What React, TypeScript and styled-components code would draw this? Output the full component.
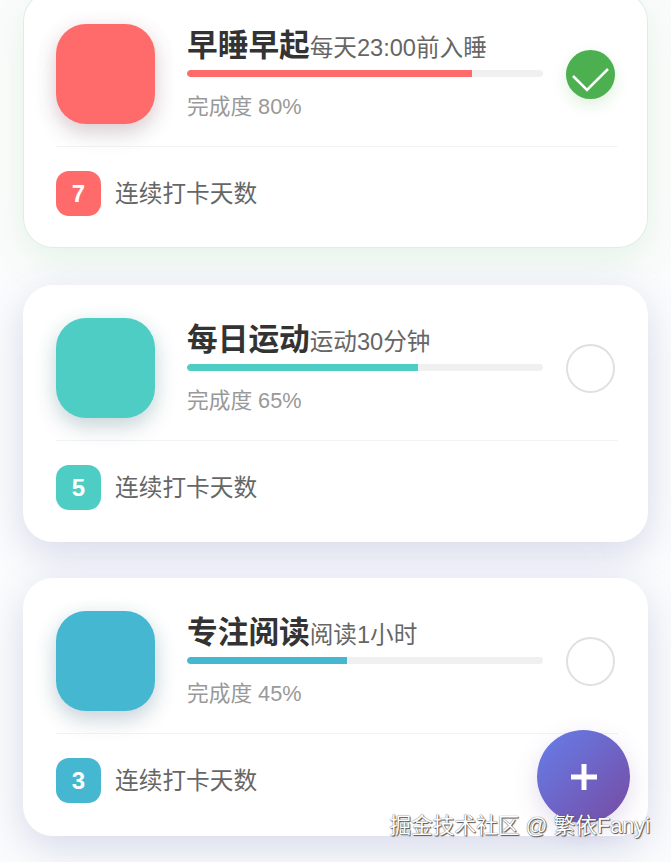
import React from 'react';
import styled, { createGlobalStyle } from 'styled-components';

const GlobalStyle = createGlobalStyle`
  html, body {
    margin: 0;
    height: 100%;
    overflow: hidden;
    background: #fbfcfd;
    font-family: "Liberation Sans", "Noto Sans CJK SC", sans-serif;
  }
`;

const Page = styled.div`
  position: relative;
  width: 671px;
  height: 862px;
  overflow: hidden;
`;

const List = styled.div`
  display: flex;
  flex-direction: column;
  gap: 36px;
  margin-top: -9px;
  padding: 0 23px;
`;

const Card = styled.div<{ $done?: boolean }>`
  height: 257px;
  box-sizing: border-box;
  padding: 33px 30px 0 33px;
  background: #fff;
  border-radius: 30px;
  margin-bottom: ${(p) => (p.$done ? '1px' : '0')};
  box-shadow: ${(p) =>
    p.$done
      ? 'inset 0 0 0 1px #dcefe1, 0 12px 40px rgba(76, 175, 80, 0.13)'
      : '0 12px 40px rgba(70, 80, 160, 0.2)'};

  &:last-child {
    height: 258px;
  }
`;

const Main = styled.div`
  display: flex;
  align-items: flex-start;
  height: 123px;
  box-sizing: border-box;
  border-bottom: 1px solid #f2f3f4;
`;

const Icon = styled.div<{ $color: string }>`
  flex: none;
  width: 99px;
  height: 100px;
  border-radius: 30px;
  background: ${(p) => p.$color};
  box-shadow: 0 9px 22px rgba(60, 70, 90, 0.2), 0 4px 20px ${(p) => p.$color}22;
`;

const Body = styled.div`
  flex: none;
  width: 356px;
  margin-left: 32px;
`;

const TitleRow = styled.div`
  display: flex;
  align-items: baseline;
  height: 46px;
  white-space: nowrap;
`;

const Title = styled.span`
  font-size: 30.7px;
  line-height: 44px;
  font-weight: 700;
  color: #333;
`;

const Desc = styled.span`
  font-size: 23.6px;
  color: #666;
`;

const Track = styled.div`
  height: 7px;
  border-radius: 4px;
  background: #f0f0f0;
  overflow: hidden;
`;

const Fill = styled.div<{ $color: string }>`
  height: 100%;
  border-radius: 4px 0 0 4px;
  background: ${(p) => p.$color};
`;

const Percent = styled.div`
  margin-top: 14px;
  font-size: 21.7px;
  line-height: 32px;
  color: #999;
`;

const Check = styled.div<{ $done?: boolean }>`
  flex: none;
  box-sizing: border-box;
  width: 49px;
  height: 49px;
  margin: 26px 0 0 23px;
  border-radius: 50%;
  background: ${(p) => (p.$done ? '#4caf50' : '#fff')};
  border: ${(p) => (p.$done ? 'none' : '2px solid #e0e0e0')};
  box-shadow: ${(p) => (p.$done ? '0 6px 16px rgba(76, 175, 80, 0.18)' : 'none')};
`;

const Footer = styled.div`
  display: flex;
  align-items: center;
  gap: 14px;
  padding-top: 24px;
`;

const Streak = styled.div<{ $color: string }>`
  width: 45px;
  height: 45px;
  display: flex;
  align-items: center;
  justify-content: center;
  border-radius: 13px;
  background: ${(p) => p.$color};
  color: #fff;
  font-size: 24px;
  font-weight: 700;
`;

const StreakLabel = styled.span`
  font-size: 23.7px;
  padding-bottom: 4px;
  color: #666;
`;

const Fab = styled.div`
  position: absolute;
  left: 537px;
  top: 730px;
  width: 93px;
  height: 93px;
  display: flex;
  align-items: center;
  justify-content: center;
  border-radius: 50%;
  background: linear-gradient(135deg, #667eea, #764ba2);
  box-shadow: 0 8px 24px rgba(118, 75, 162, 0.2);
`;

const Watermark = styled.div`
  position: absolute;
  right: 21px;
  top: 811px;
  font-size: 21.7px;
  line-height: 30px;
  white-space: nowrap;
  color: #fff;
  text-shadow: 0 0 1px #333, 1px 1px 1px #555;
`;

const habits = [
  { title: '早睡早起', desc: '每天23:00前入睡', pct: 80, color: '#ff6b6b', days: 7, done: true },
  { title: '每日运动', desc: '运动30分钟', pct: 65, color: '#4ecdc4', days: 5, done: false },
  { title: '专注阅读', desc: '阅读1小时', pct: 45, color: '#45b7d1', days: 3, done: false },
];

export default function App() {
  return (
    <Page>
      <GlobalStyle />
      <List>
        {habits.map((h) => (
          <Card key={h.title} $done={h.done}>
            <Main>
              <Icon $color={h.color} />
              <Body>
                <TitleRow>
                  <Title>{h.title}</Title>
                  <Desc>{h.desc}</Desc>
                </TitleRow>
                <Track>
                  <Fill $color={h.color} style={{ width: `${h.pct}%` }} />
                </Track>
                <Percent>完成度 {h.pct}%</Percent>
              </Body>
              <Check $done={h.done}>
                {h.done && (
                  <svg width="49" height="49" viewBox="0 0 49 49" fill="none">
                    <path d="M7 26 L21 40 L42 19" stroke="#fff" strokeWidth="2.6" />
                  </svg>
                )}
              </Check>
            </Main>
            <Footer>
              <Streak $color={h.color}>{h.days}</Streak>
              <StreakLabel>连续打卡天数</StreakLabel>
            </Footer>
          </Card>
        ))}
      </List>
      <Fab>
        <svg width="28" height="28" viewBox="0 0 28 28">
          <path d="M14 1 V27 M1 14 H27" stroke="#fff" strokeWidth="5" />
        </svg>
      </Fab>
      <Watermark>掘金技术社区 @ 繁依Fanyi</Watermark>
    </Page>
  );
}
